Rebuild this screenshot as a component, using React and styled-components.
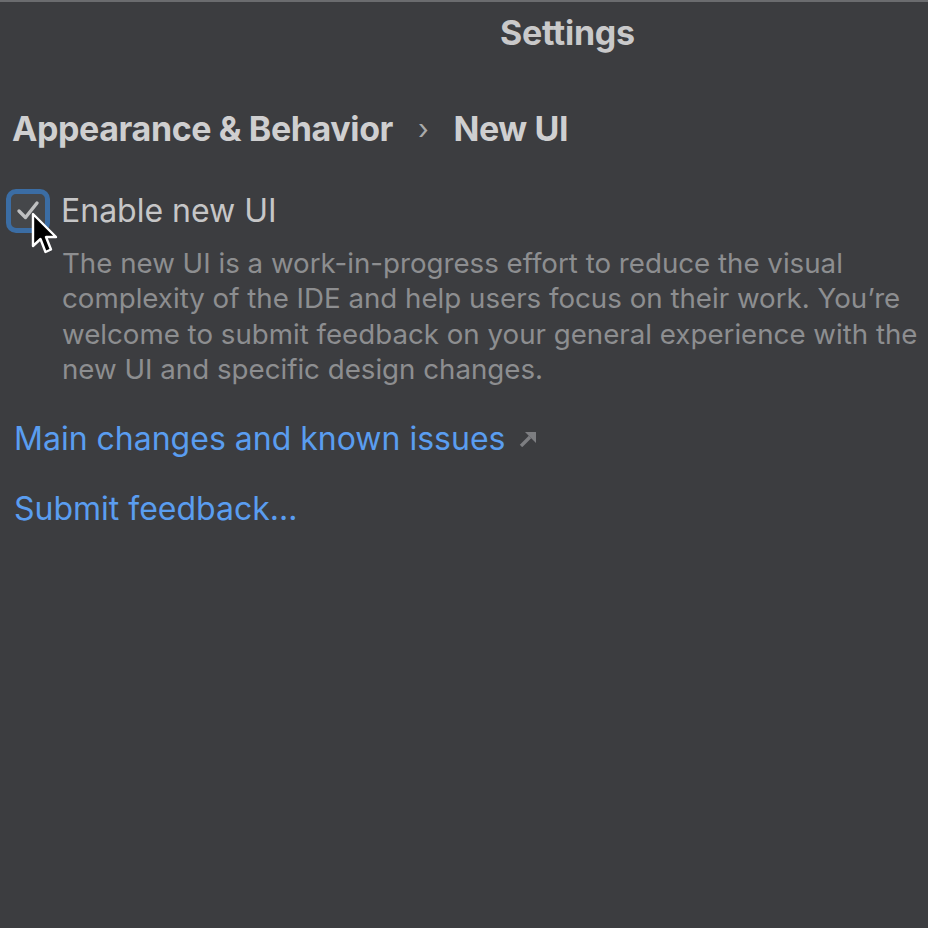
import styled, { createGlobalStyle } from "styled-components";

const GlobalStyle = createGlobalStyle`
  html, body {
    margin: 0;
    padding: 0;
    background: #3c3d40;
  }
  body {
    font-family: Inter, "Noto Sans", sans-serif;
  }
`;

const Window = styled.div`
  width: 928px;
  height: 928px;
  box-sizing: border-box;
  border-top: 2px solid #6b6c6f;
  background: #3c3d40;
  overflow: hidden;
`;

const TitleBar = styled.div`
  height: 62px;
  display: flex;
  align-items: center;
  padding-left: 500px;
`;

const Title = styled.h1`
  margin: 0;
  font-size: 34px;
  line-height: 40px;
  font-weight: 700;
  color: #c9c9ca;
  letter-spacing: -0.3px;
`;

const Breadcrumb = styled.div`
  display: flex;
  align-items: center;
  gap: 25px;
  padding: 45px 0 0 12px;
  font-size: 34px;
  line-height: 40px;
  font-weight: 700;
  color: #cfcfd0;
  letter-spacing: -0.4px;
`;

const Chevron = styled.span`
  font-size: 28px;
  font-weight: 400;
  color: #a9aaab;
`;

const Content = styled.div`
  padding: 40px 0 0 6px;
`;

const CheckRow = styled.label`
  display: flex;
  align-items: center;
  gap: 11px;
  position: relative;
`;

const CheckBox = styled.span`
  width: 44px;
  height: 44px;
  box-sizing: border-box;
  border: 5px solid #3b6da4;
  border-radius: 10px;
  background: #45474a;
  display: flex;
  align-items: center;
  justify-content: center;
`;

const CheckLabel = styled.span`
  font-size: 32px;
  line-height: 44px;
  color: #c6c6c7;
`;

const Cursor = styled.svg`
  position: absolute;
  left: 25px;
  top: 23px;
`;

const Description = styled.p`
  margin: 13px -12px 0 56px;
  font-size: 27.7px;
  line-height: 35.3px;
  color: #8d8e90;
`;

const Links = styled.div`
  display: flex;
  flex-direction: column;
  gap: 30px;
  padding: 32px 0 0 14px;
`;

const Link = styled.a`
  display: flex;
  align-items: center;
  gap: 14px;
  font-size: 32px;
  line-height: 40px;
  color: #5a9df0;
  text-decoration: none;
`;

const ExternalArrow = () => (
  <svg width="18" height="16" viewBox="0 0 18 16">
    <path d="M2 15 L11 6" stroke="#7d7e81" strokeWidth="3.4" fill="none" />
    <path d="M6 1 H17 V12 Z" fill="#7d7e81" />
  </svg>
);

export default function App() {
  return (
    <Window>
      <GlobalStyle />
      <TitleBar>
        <Title>Settings</Title>
      </TitleBar>
      <Breadcrumb>
        <span>Appearance &amp; Behavior</span>
        <Chevron>›</Chevron>
        <span>New UI</span>
      </Breadcrumb>
      <Content>
        <CheckRow>
          <CheckBox>
            <svg width="24" height="22" viewBox="0 0 24 22">
              <path d="M3 11 L9.5 17.5 L21 3" stroke="#bfc0c1" strokeWidth="3.4" fill="none" strokeLinecap="round" strokeLinejoin="round" />
            </svg>
          </CheckBox>
          <CheckLabel>Enable new UI</CheckLabel>
          <Cursor width="32" height="46" viewBox="0 0 32 46">
            <path d="M2 2 L2 34 L9.5 27 L14.5 40 L20 37.5 L15 25 L25 25 Z" fill="#000" stroke="#fff" strokeWidth="2.4" strokeLinejoin="round" />
          </Cursor>
        </CheckRow>
        <Description>
          The new UI is a work-in-progress effort to reduce the visual complexity of the IDE and help users focus on their work. You’re welcome to submit feedback on your general experience with the new UI and specific design changes.
        </Description>
      </Content>
      <Links>
        <Link href="#">
          Main changes and known issues
          <ExternalArrow />
        </Link>
        <Link href="#">Submit feedback...</Link>
      </Links>
    </Window>
  );
}
